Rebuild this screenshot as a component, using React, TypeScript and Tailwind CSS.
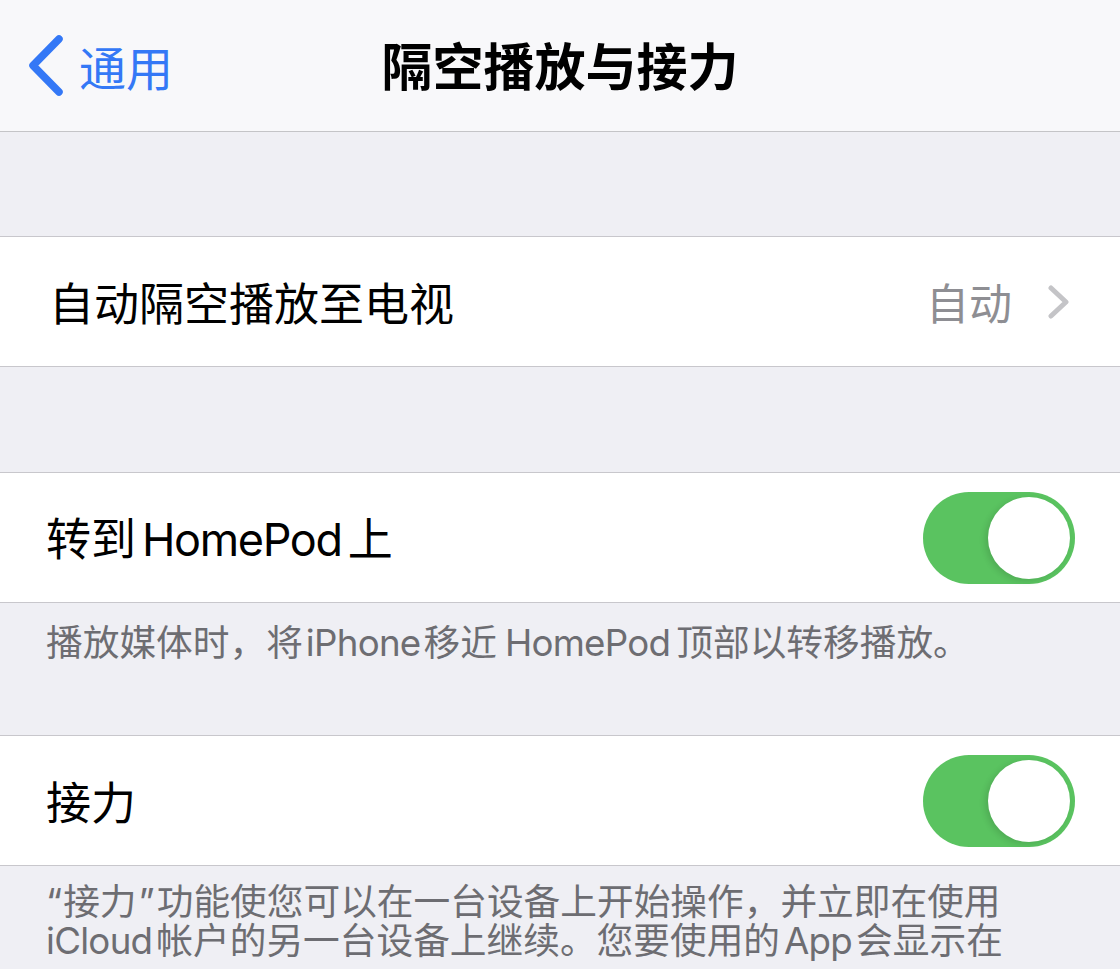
import React from "react";

const FONT = {
  fontFamily: '"Noto Sans CJK SC", "Noto Sans", sans-serif',
};
const LATIN = { fontFamily: 'Inter, "Noto Sans CJK SC", sans-serif' };

function Toggle() {
  return (
    <div className="relative h-[92px] w-[152px] rounded-full bg-[#5ac360]">
      <div className="absolute right-[5px] top-[5px] h-[82px] w-[82px] rounded-full bg-white shadow-[-3px_2px_6px_rgba(0,0,0,0.12)]" />
    </div>
  );
}

function L({
  children,
  className = "tracking-[-0.02em]",
}: {
  children: React.ReactNode;
  className?: string;
}) {
  return (
    <span style={LATIN} className={className}>
      {children}
    </span>
  );
}

export default function App() {
  return (
    <div
      className="h-[969px] w-[1120px] overflow-hidden bg-[#efeff4]"
      style={FONT}
    >
      {/* Nav bar */}
      <div className="grid h-[132px] grid-cols-[1fr_auto_1fr] items-center border-b border-[#c4c4c7] bg-[#f8f8fa]">
        <div className="flex items-center pl-[27px]">
          <svg width="37" height="63" viewBox="0 0 37 63" className="shrink-0">
            <path
              d="M32 5 L6 31.5 L32 58"
              fill="none"
              stroke="#3478f6"
              strokeWidth="7.5"
              strokeLinecap="round"
              strokeLinejoin="round"
            />
          </svg>
          <span className="ml-[15px] text-[47px] leading-none text-[#3478f6]">
            通用
          </span>
        </div>
        <div className="pb-[2px] text-[51px] font-semibold leading-none text-black">
          隔空播放与接力
        </div>
        <div />
      </div>

      <div className="h-[104px]" />

      {/* Row 1 */}
      <div className="flex h-[131px] items-center border-y border-[#c8c7cc] bg-white pl-[49px] pr-[50px]">
        <span className="flex-1 text-[45px] leading-none text-black">
          自动隔空播放至电视
        </span>
        <span className="text-[43px] leading-none text-[#8e8e93]">自动</span>
        <svg width="22" height="34" viewBox="0 0 22 34" className="ml-[36px]">
          <path
            d="M3 3 L18 17 L3 31"
            fill="none"
            stroke="#c4c4c7"
            strokeWidth="5"
            strokeLinecap="round"
            strokeLinejoin="round"
          />
        </svg>
      </div>

      <div className="h-[105px]" />

      {/* Row 2 */}
      <div className="flex h-[131px] items-center border-y border-[#c8c7cc] bg-white pl-[46px] pr-[45px]">
        <span className="flex-1 text-[45px] leading-none text-black">
          转到
          <L className="ml-[6px] mr-[6px] tracking-[-0.03em]">HomePod</L>上
        </span>
        <Toggle />
      </div>

      {/* Footer 1 */}
      <div className="h-[132px] pl-[46px] pt-[17px] text-[36.7px] leading-[40px] text-[#6d6d72]">
        播放媒体时，将<L className="mx-[3px] tracking-[-0.02em]">iPhone</L>移近
        <L className="ml-[8px] mr-[6px] tracking-[-0.02em]">HomePod</L>
        顶部以转移播放。
      </div>

      {/* Row 3 */}
      <div className="flex h-[131px] items-center border-y border-[#c8c7cc] bg-white pl-[46px] pr-[45px]">
        <span className="flex-1 text-[45px] leading-none text-black">接力</span>
        <Toggle />
      </div>

      {/* Footer 2 */}
      <div className="pl-[46px] pt-[15px] text-[36.7px] leading-[37px] text-[#6d6d72]">
        <div className="whitespace-nowrap">
          <L className="mr-[1px]">“</L>接力<L className="mx-[2px]">”</L>
          功能使您可以在一台设备上开始操作，并立即在使用
        </div>
        <div className="whitespace-nowrap">
          <L className="mr-[4px] tracking-[-0.02em]">iCloud</L>
          帐户的另一台设备上继续。您要使用的
          <L className="mx-[4px] tracking-[-0.02em]">App</L>会显示在
        </div>
      </div>
    </div>
  );
}
